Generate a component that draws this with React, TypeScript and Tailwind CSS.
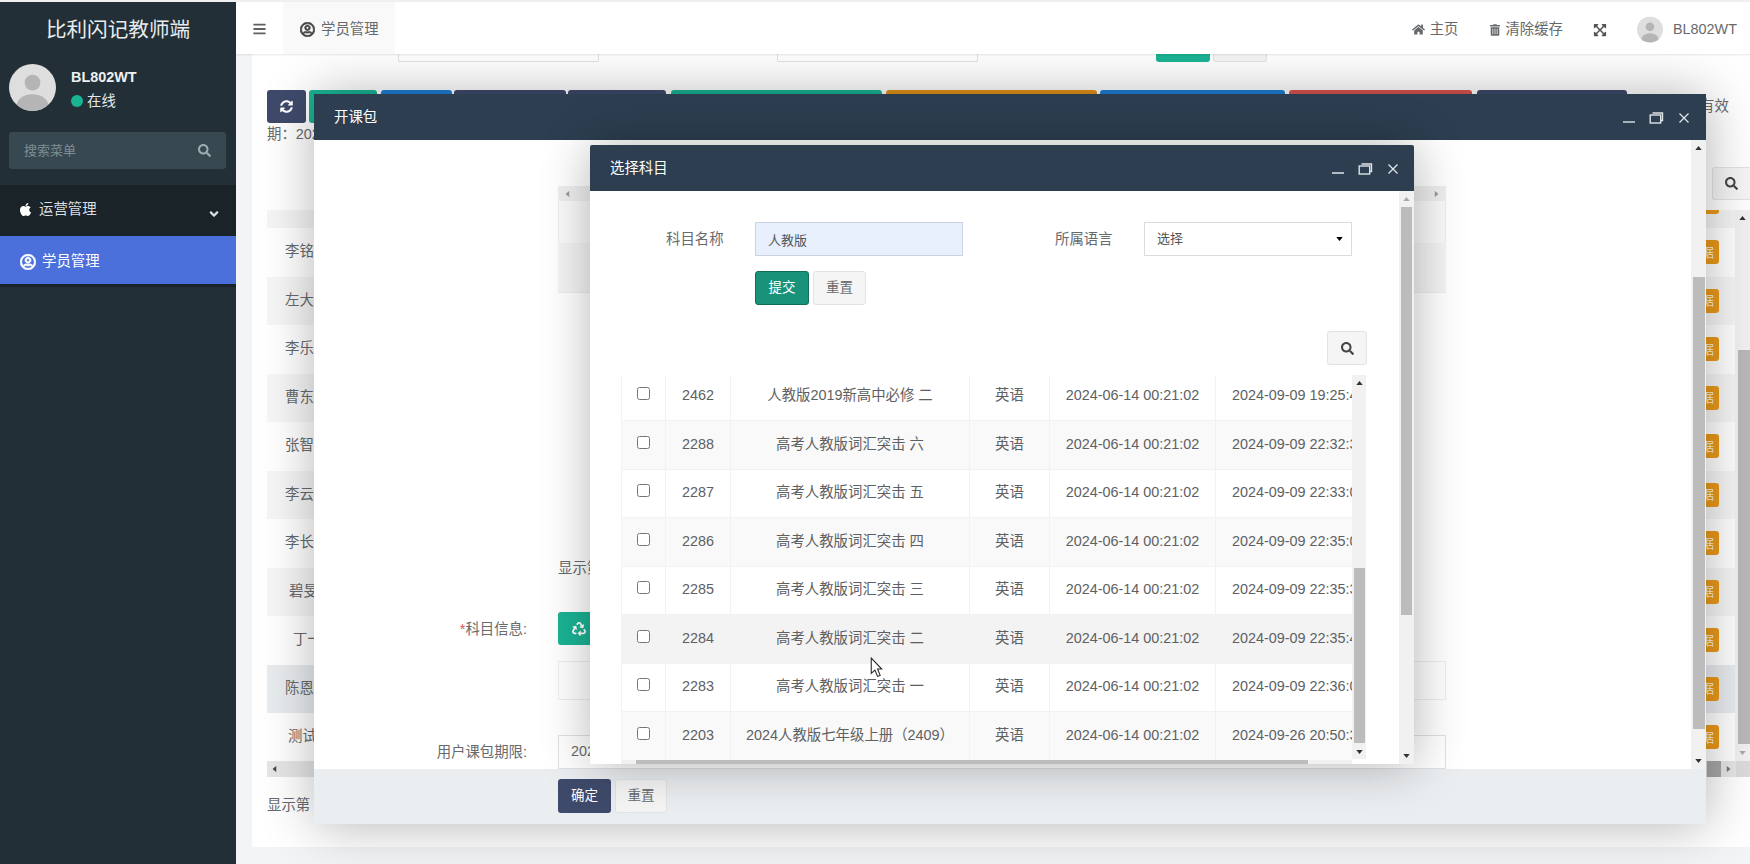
import { FaApple, FaAngleDown, FaBars, FaExpandArrowsAlt, FaHome, FaRecycle, FaRegUserCircle, FaSearch, FaSyncAlt, FaTrashAlt } from "react-icons/fa";

const subjects = [
  { id: 2462, name: "人教版2019新高中必修 二", updated: "2024-09-09 19:25:41" },
  { id: 2288, name: "高考人教版词汇突击 六", updated: "2024-09-09 22:32:36" },
  { id: 2287, name: "高考人教版词汇突击 五", updated: "2024-09-09 22:33:05" },
  { id: 2286, name: "高考人教版词汇突击 四", updated: "2024-09-09 22:35:07" },
  { id: 2285, name: "高考人教版词汇突击 三", updated: "2024-09-09 22:35:31" },
  { id: 2284, name: "高考人教版词汇突击 二", updated: "2024-09-09 22:35:44" },
  { id: 2283, name: "高考人教版词汇突击 一", updated: "2024-09-09 22:36:01" },
  { id: 2203, name: "2024人教版七年级上册（2409）", updated: "2024-09-26 20:50:32" },
];

const students = [
  { name: "李铭", cell: "pl-[18px] bg-white" },
  { name: "左大", cell: "pl-[18px] bg-[#f6f6f6]" },
  { name: "李乐", cell: "pl-[18px] bg-white" },
  { name: "曹东", cell: "pl-[18px] bg-[#f6f6f6]" },
  { name: "张智", cell: "pl-[18px] bg-white" },
  { name: "李云", cell: "pl-[18px] bg-[#f6f6f6]" },
  { name: "李长", cell: "pl-[18px] bg-white" },
  { name: "碧旻", cell: "pl-[22px] bg-[#f6f6f6]" },
  { name: "丁一", cell: "pl-[26px] bg-white" },
  { name: "陈恩", cell: "pl-[18px] bg-[#e9ecef]" },
  { name: "测试", cell: "pl-[21px] bg-white" },
];

function Avatar({ className }: { className: string }) {
  return (
    <svg viewBox="0 0 48 48" className={className}>
      <defs>
        <clipPath id="avatar-clip">
          <ellipse cx="24" cy="24" rx="24" ry="24" />
        </clipPath>
      </defs>
      <g clipPath="url(#avatar-clip)">
        <rect width="48" height="48" fill="#dedede" />
        <circle cx="24" cy="19" r="8" fill="#b5b5b5" />
        <ellipse cx="24" cy="42" rx="16" ry="11" fill="#b5b5b5" />
      </g>
    </svg>
  );
}

function Arrow({ up, className }: { up?: boolean; className: string }) {
  return (
    <svg viewBox="0 0 8 5" className={className} fill="currentColor">
      <path d={up ? "M0 5 L4 0 L8 5 Z" : "M0 0 L8 0 L4 5 Z"} />
    </svg>
  );
}

function WindowControls() {
  return (
    <div className="flex items-center text-[#dfe4e8]">
      <svg viewBox="0 0 12 12" className="h-[12px] w-[12px]" stroke="currentColor" strokeWidth="1.4">
        <path d="M0 10 H12" />
      </svg>
      <svg viewBox="0 0 14 12" className="ml-[14px] h-[12px] w-[15px]" fill="none" stroke="currentColor" strokeWidth="1.4">
        <rect x="0.7" y="3" width="10.5" height="8" />
        <path d="M3 1 H13 V8.5 H11.5" />
      </svg>
      <svg viewBox="0 0 10 10" className="ml-[15px] h-[10px] w-[10px]" fill="none" stroke="currentColor" strokeWidth="1.3">
        <path d="M0.5 0.5 L9.5 9.5 M9.5 0.5 L0.5 9.5" />
      </svg>
    </div>
  );
}

function ScrollBar({ thumb, bar, arrow }: { thumb: string; bar: string; arrow: string }) {
  return (
    <div className={`flex flex-col items-center bg-[#f1f1f1] ${bar}`}>
      <div className="flex h-[16px] shrink-0 items-center">
        <Arrow up className={`h-[4px] w-[7px] ${arrow}`} />
      </div>
      <div className={`shrink-0 bg-[#bcbcbc] ${thumb}`} />
      <div className="flex-1" />
      <div className="flex h-[17px] shrink-0 items-center">
        <Arrow className="h-[4px] w-[7px] text-[#333]" />
      </div>
    </div>
  );
}

function ToolbarStub({ className }: { className: string }) {
  return <div className={`h-[33px] shrink-0 rounded-[3px] ${className}`} />;
}

function Sidebar() {
  return (
    <aside className="flex w-[236px] shrink-0 flex-col bg-[#222f36]">
      <div className="flex h-[52px] shrink-0 items-center justify-center pt-[4px] text-[20.6px] text-[#e8ecee]">比利闪记教师端</div>
      <div className="ml-[9px] mt-[10px] flex h-[47px] items-start">
        <Avatar className="h-[47px] w-[47px]" />
        <div className="ml-[15px] pt-[3px]">
          <div className="text-[14.4px] font-bold leading-[20px] text-[#eef1f2]">BL802WT</div>
          <div className="mt-[4px] flex items-center text-[14.4px] leading-[20px] text-[#e4e8ea]">
            <span className="mr-[4px] h-[12px] w-[12px] rounded-full bg-[#1ab394]" />
            在线
          </div>
        </div>
      </div>
      <div className="ml-[9px] mr-[10px] mt-[21px] flex h-[37px] items-center justify-between rounded-[3px] bg-[#374850] pl-[15px] pr-[15px] text-[13px] text-[#7f8e95]">
        搜索菜单
        <FaSearch className="h-[13px] w-[13px] text-[#a0acb1]" />
      </div>
      <div className="mt-[16px] flex h-[51px] items-center bg-[#1a2328] pb-[2px] pl-[19px] pr-[16px] text-[14.4px] text-[#d9dfe2]">
        <FaApple className="h-[15px] w-[13px] text-white" />
        <span className="ml-[7px] flex-1">运营管理</span>
        <FaAngleDown className="mt-[8px] h-[14px] w-[12px]" />
      </div>
      <div className="flex h-[48px] items-center bg-[#4b6fdb] pl-[20px] pt-[3px] text-[14.4px] text-white">
        <FaRegUserCircle className="h-[16px] w-[16px]" stroke="currentColor" strokeWidth={24} />
        <span className="ml-[6px]">学员管理</span>
      </div>
      <div className="h-[3px] bg-[#1a2328]" />
    </aside>
  );
}

function Header() {
  return (
    <header className="relative z-10 flex h-[52px] shrink-0 items-center bg-white text-[14.4px] text-[#676a6c] shadow-[0_1px_2px_rgba(0,0,0,0.1)]">
      <FaBars className="ml-[17px] mt-[2px] h-[14px] w-[13px] text-[#5c6063]" />
      <div className="ml-[17px] flex h-full w-[112px] items-center bg-[#f9f9f9] pl-[17px] pt-[3px]">
        <FaRegUserCircle className="h-[15px] w-[15px] text-[#444]" stroke="currentColor" strokeWidth={24} />
        <span className="ml-[6px]">学员管理</span>
      </div>
      <div className="ml-auto flex items-center pr-[13px] pt-[3px]">
        <FaHome className="h-[13px] w-[13px]" />
        <span className="ml-[5px]">主页</span>
        <FaTrashAlt className="ml-[32px] h-[12px] w-[10px]" />
        <span className="ml-[5px]">清除缓存</span>
        <FaExpandArrowsAlt className="ml-[30px] h-[14px] w-[14px] text-[#555]" />
        <Avatar className="ml-[30px] h-[27px] w-[26px]" />
        <span className="ml-[10px]">BL802WT</span>
      </div>
    </header>
  );
}

function Page() {
  return (
    <div className="flex flex-1 flex-col bg-[#f3f4f6] pl-[16px] text-[14.4px] text-[#676a6c]">
      <div className="flex h-[793px] flex-col rounded-[2px] bg-white pl-[15px]">
        <div className="flex h-[8px] shrink-0">
          <div className="ml-[131px] w-[201px] rounded-b-[2px] border border-t-0 border-[#dfe1e5]" />
          <div className="ml-[178px] w-[201px] rounded-b-[2px] border border-t-0 border-[#dfe1e5]" />
          <div className="ml-[178px] w-[54px] rounded-b-[3px] bg-[#1ab394]" />
          <div className="ml-[3px] w-[54px] rounded-b-[3px] border border-t-0 border-[#e3e3e3] bg-[#f5f5f5]" />
        </div>
        <div className="mt-[28px] flex h-[33px] shrink-0 items-center">
          <div className="flex h-[33px] w-[39px] shrink-0 items-center justify-center rounded-[3px] bg-[#3f4a6b] text-white">
            <FaSyncAlt className="h-[13px] w-[13px]" />
          </div>
          <ToolbarStub className="ml-[3px] w-[68px] bg-[#1ab394]" />
          <ToolbarStub className="ml-[4px] w-[71px] bg-[#1c7ed6]" />
          <ToolbarStub className="ml-[2px] w-[112px] bg-[#3f4a6b]" />
          <ToolbarStub className="ml-[2px] w-[98px] bg-[#3f4a6b]" />
          <ToolbarStub className="ml-[5px] w-[211px] bg-[#1ab394]" />
          <ToolbarStub className="ml-[4px] w-[211px] bg-[#e09118]" />
          <ToolbarStub className="ml-[3px] w-[185px] bg-[#1c7ed6]" />
          <ToolbarStub className="ml-[4px] w-[183px] bg-[#d9534f]" />
          <ToolbarStub className="ml-[5px] w-[150px] bg-[#3f4a6b]" />
          <span className="ml-[73px] shrink-0 self-center">有效</span>
        </div>
        <div className="mt-[1px] h-[20px] shrink-0 leading-[20px]">期：2024</div>
        <div className="mt-[23px] flex h-[33px] shrink-0 justify-end">
          <div className="flex w-[38px] items-center justify-center rounded-l-[3px] border border-r-0 border-[#e3e3e3] bg-[#f5f5f5] text-[#444]">
            <FaSearch className="h-[13px] w-[13px]" />
          </div>
        </div>
        <div className="mt-[10px] flex h-[551px] shrink-0">
          <div className="flex w-[1468px] shrink-0 flex-col overflow-hidden">
            <div className="flex h-[18px] shrink-0 justify-end bg-[#f5f5f5] pr-[16px]">
              <div className="h-[4px] w-[60px] rounded-b-[3px] bg-[#eb9a1a]" />
            </div>
            {students.map((s) => (
              <div key={s.name} className={`flex h-[48.5px] shrink-0 items-center justify-between pr-[16px] ${s.cell}`}>
                <span>{s.name}</span>
                <span className="flex h-[24px] w-[60px] items-center justify-end rounded-[3px] bg-[#eb9a1a] pr-[5px] text-[13px] text-[#fdf3e0]">数据</span>
              </div>
            ))}
          </div>
          <div className="flex w-[15px] shrink-0 flex-col items-center bg-[#f1f1f1]">
            <div className="flex h-[16px] shrink-0 items-center">
              <Arrow up className="h-[4px] w-[7px] text-[#333]" />
            </div>
            <div className="ml-[3px] mt-[124px] h-[394px] w-[12px] shrink-0 bg-[#b8b8b8]" />
            <div className="flex-1" />
            <div className="flex h-[16px] shrink-0 items-center">
              <Arrow className="h-[4px] w-[7px] text-[#a9a9a9]" />
            </div>
          </div>
        </div>
        <div className="flex h-[16px] shrink-0 items-center bg-[#e6e6e6]">
          <Arrow className="ml-[4px] h-[4px] w-[7px] rotate-90 text-[#444]" />
          <div className="ml-auto flex h-full items-center">
            <div className="mr-[4px] h-full w-[14px] bg-[#a8a8a8]" />
            <Arrow className="h-[4px] w-[7px] -rotate-90 text-[#777]" />
            <div className="ml-[4px] h-full w-[14px] bg-[#dcdcdc]" />
          </div>
        </div>
        <div className="mt-[18px] leading-[20px]">显示第 1 到 11 条记录</div>
      </div>
    </div>
  );
}

function SubjectTable() {
  return (
    <div className="ml-[31px] mt-[10px] flex h-[389px] w-[745px] shrink-0 text-[#5e6163]">
      <div className="flex w-[731px] shrink-0 flex-col overflow-hidden">
        <div className="h-[385px] shrink-0 overflow-hidden">
          <div className="-mt-[2.5px]">
            {subjects.map((s, i) => (
              <div
                key={s.id}
                className={`grid h-[48.5px] grid-cols-[45px_65px_239px_80px_166px_136px] border-b border-[#f2f2f2] ${
                  s.id === 2284 ? "bg-[#f3f3f3]" : i % 2 === 1 ? "bg-[#f9f9f9]" : "bg-white"
                }`}
              >
                <div className="flex items-center justify-center border-l border-r border-[#f2f2f2] pb-[5px]">
                  <input type="checkbox" className="h-[13px] w-[13px]" />
                </div>
                <div className="flex items-center justify-center border-r border-[#f2f2f2]">{s.id}</div>
                <div className="flex items-center justify-center whitespace-nowrap border-r border-[#f2f2f2]">{s.name}</div>
                <div className="flex items-center justify-center border-r border-[#f2f2f2]">英语</div>
                <div className="flex items-center justify-center whitespace-nowrap border-r border-[#f2f2f2]">2024-06-14 00:21:02</div>
                <div className="flex items-center overflow-hidden whitespace-nowrap pl-[16px]">{s.updated}</div>
              </div>
            ))}
          </div>
        </div>
        <div className="h-[4px] shrink-0 bg-[#f1f1f1]">
          <div className="ml-[15px] h-full w-[672px] bg-[#bcbcbc]" />
        </div>
      </div>
      <ScrollBar bar="w-[14px] h-[384px]" thumb="mt-[177px] h-[175px] w-[11px]" arrow="text-[#333]" />
    </div>
  );
}

function SubjectModal() {
  return (
    <div className="absolute left-[276px] top-[51px] flex h-[619px] w-[824px] flex-col overflow-hidden rounded-t-[2px] bg-white shadow-[1px_1px_50px_rgba(0,0,0,0.3)]">
      <div className="flex h-[46px] shrink-0 items-center justify-between bg-[#2c3e50] pl-[20px] pr-[16px] pt-[1px] text-white">
        选择科目
        <WindowControls />
      </div>
      <div className="flex flex-1 overflow-hidden">
        <div className="w-[809px] shrink-0">
          <div className="mt-[31px] flex h-[34px] items-center">
            <span className="ml-[76px] w-[59px] whitespace-nowrap pt-[2px]">科目名称</span>
            <input
              defaultValue="人教版"
              className="ml-[30px] h-[34px] w-[208px] border border-[#ccd3e0] bg-[#e8f0fe] px-[12px] text-[13px] text-[#555] outline-none"
            />
            <span className="ml-[92px] w-[58px] whitespace-nowrap pt-[2px]">所属语言</span>
            <div className="ml-[31px] flex h-[34px] w-[208px] items-center justify-between border border-[#d9dce0] pl-[12px] pr-[8px] text-[13px] text-[#555]">
              选择
              <Arrow className="h-[4px] w-[7px] text-black" />
            </div>
          </div>
          <div className="ml-[165px] mt-[15px] flex gap-[4px] text-[13.5px]">
            <button className="h-[34px] w-[54px] rounded-[3px] border border-[#0f6f59] bg-[#18937a] text-white">提交</button>
            <button className="h-[34px] w-[53px] rounded-[3px] border border-[#e3e3e3] bg-[#f5f5f5]">重置</button>
          </div>
          <div className="mr-[32px] mt-[26px] flex justify-end">
            <div className="flex h-[34px] w-[40px] items-center justify-center rounded-[3px] border border-[#e3e3e3] bg-[#f5f5f5] text-[#444]">
              <FaSearch className="h-[13px] w-[13px]" />
            </div>
          </div>
          <SubjectTable />
        </div>
        <ScrollBar bar="w-[15px]" thumb="h-[408px] w-[11px]" arrow="text-[#a9a9a9]" />
      </div>
    </div>
  );
}

function PackageModal() {
  return (
    <div className="absolute left-[314px] top-[94px] flex h-[730px] w-[1392px] flex-col bg-white shadow-[1px_1px_50px_rgba(0,0,0,0.3)]">
      <div className="flex h-[46px] shrink-0 items-center justify-between bg-[#2c3e50] pl-[20px] pr-[17px] pt-[2px] text-white">
        开课包
        <WindowControls />
      </div>
      <div className="flex h-[629px] shrink-0">
        <div className="w-[1377px] shrink-0">
          <div className="ml-[244px] mt-[46px] flex h-[15px] w-[888px] items-center justify-between bg-[#efefef] px-[6px] text-[#999]">
            <Arrow className="h-[4px] w-[7px] rotate-90" />
            <Arrow className="h-[4px] w-[7px] -rotate-90" />
          </div>
          <div className="ml-[244px] h-[42px] w-[888px] border-x border-[#eeeeee] bg-[#fafafa]" />
          <div className="ml-[244px] h-[50px] w-[888px] border-b border-[#eeeeee] bg-[#f4f4f4]" />
          <div className="ml-[244px] mt-[265px] h-[20px] leading-[20px]">显示第 1 到 1 条</div>
          <div className="mt-[34px] flex h-[33px] items-center">
            <span className="w-[213px] pt-[2px] text-right">
              <span className="text-[#d9534f]">*</span>科目信息:
            </span>
            <div className="ml-[31px] flex h-[33px] w-[100px] items-center rounded-[3px] bg-[#1ab394] pl-[14px] text-white">
              <FaRecycle className="h-[14px] w-[14px]" />
            </div>
          </div>
          <div className="ml-[244px] mt-[16px] h-[39px] w-[888px] border border-[#eeeeee]" />
          <div className="mt-[35px] flex h-[34px] items-center">
            <span className="w-[213px] pt-[2px] text-right">用户课包期限:</span>
            <div className="ml-[31px] flex h-[34px] w-[888px] items-center border border-[#dfe1e5] pl-[12px]">2024</div>
          </div>
        </div>
        <ScrollBar bar="w-[15px]" thumb="mt-[121px] h-[452px] w-[12px]" arrow="text-[#333]" />
      </div>
      <div className="flex flex-1 gap-[4px] bg-[#ebeef0] pl-[244px] pt-[10px] text-[13.5px]">
        <button className="h-[34px] w-[53px] rounded-[3px] bg-[#3f4a6b] text-white">确定</button>
        <button className="h-[34px] w-[52px] rounded-[3px] border border-[#e3e3e3] bg-[#f5f5f5]">重置</button>
      </div>
      <SubjectModal />
    </div>
  );
}

export default function App() {
  return (
    <div className="relative flex h-[864px] w-[1750px] flex-col overflow-hidden bg-[#f0f0f0] pt-[2px] font-['Liberation_Sans','Noto_Sans_CJK_SC',sans-serif] text-[14.4px] text-[#676a6c]">
      <div className="flex flex-1">
        <Sidebar />
        <div className="flex min-w-0 flex-1 flex-col">
          <Header />
          <Page />
        </div>
      </div>
      <PackageModal />
      <svg viewBox="0 0 12 20" className="absolute left-[870px] top-[657px] h-[21px] w-[13px]">
        <path d="M1 1 V15.5 L4.5 12.5 L7 18.5 L9.5 17.5 L7 11.5 L11 11.5 Z" fill="#fff" stroke="#222" strokeWidth="1" />
      </svg>
    </div>
  );
}
